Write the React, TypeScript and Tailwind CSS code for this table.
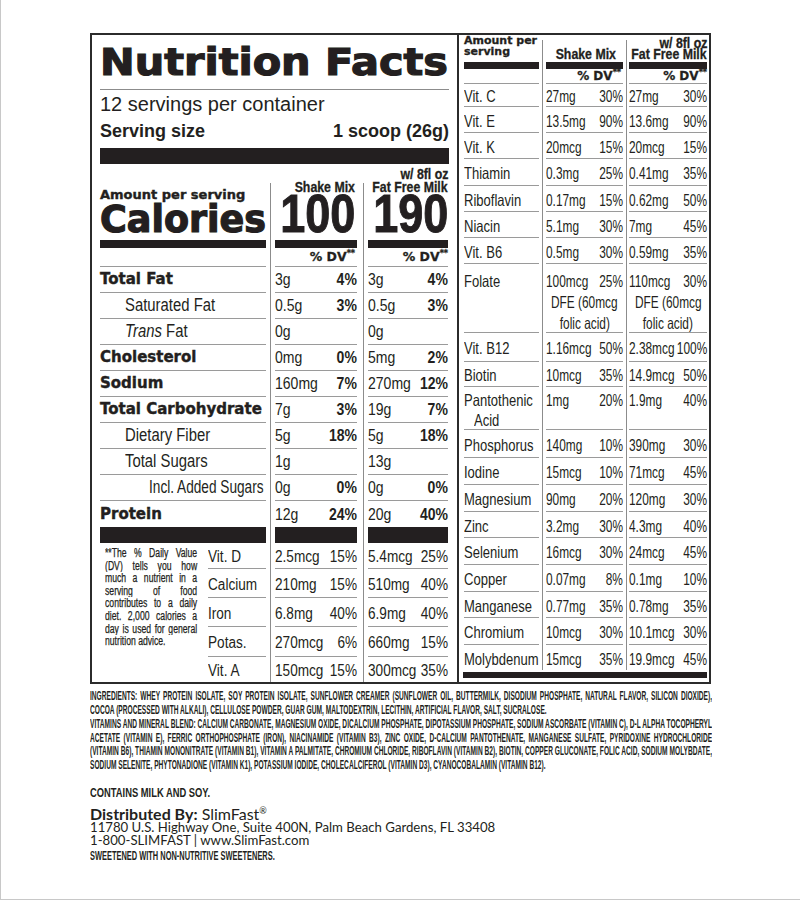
import React from "react";

const HEAVY = "font-['DejaVu_Sans',sans-serif] font-bold";
const ARIAL = "font-['Liberation_Sans',Arial,sans-serif]";
const LINE = "border-b border-[#9a9a9a]";

// Liberation Sans squeezed horizontally stands in for Helvetica Condensed
function Cn({ children, sx, o = "origin-left", cls = "" }: { children: React.ReactNode; sx: string; o?: string; cls?: string }) {
  return <span className={`inline-block whitespace-nowrap ${o} ${sx} ${cls}`}>{children}</span>;
}

function Cell({ v, p, bold, cls, sx }: { v: string; p?: string; bold?: boolean; cls: string; sx: string }) {
  return (
    <div className={`shrink-0 flex items-center ${ARIAL} ${cls}`}>
      <div className="flex-1 min-w-0">
        <Cn sx={sx}>{v}</Cn>
      </div>
      {p && (
        <div className="w-0 flex justify-end">
          <Cn sx={sx} o="origin-right" cls={bold ? "font-bold" : ""}>
            {p}
          </Cn>
        </div>
      )}
    </div>
  );
}

type Macro = { label: React.ReactNode; heavy?: boolean; pad?: string; sx?: string; a: string; ap?: string; b: string; bp?: string };

const macros: Macro[] = [
  { label: "Total Fat", heavy: true, a: "3g", ap: "4%", b: "3g", bp: "4%" },
  { label: "Saturated Fat", pad: "pl-[25px]", a: "0.5g", ap: "3%", b: "0.5g", bp: "3%" },
  { label: <><i>Trans</i> Fat</>, pad: "pl-[25px]", a: "0g", b: "0g" },
  { label: "Cholesterol", heavy: true, a: "0mg", ap: "0%", b: "5mg", bp: "2%" },
  { label: "Sodium", heavy: true, a: "160mg", ap: "7%", b: "270mg", bp: "12%" },
  { label: "Total Carbohydrate", heavy: true, a: "7g", ap: "3%", b: "19g", bp: "7%" },
  { label: "Dietary Fiber", pad: "pl-[25px]", a: "5g", ap: "18%", b: "5g", bp: "18%" },
  { label: "Total Sugars", pad: "pl-[25px]", a: "1g", b: "13g" },
  { label: "Incl. Added Sugars", pad: "pl-[49px]", sx: "scale-x-[0.78]", a: "0g", ap: "0%", b: "0g", bp: "0%" },
  { label: "Protein", heavy: true, a: "12g", ap: "24%", b: "20g", bp: "40%" },
];

const minerals = [
  { label: "Vit. D", a: "2.5mcg", ap: "15%", b: "5.4mcg", bp: "25%", h: "h-[26px]" },
  { label: "Calcium", a: "210mg", ap: "15%", b: "510mg", bp: "40%", h: "h-[29px]" },
  { label: "Iron", a: "6.8mg", ap: "40%", b: "6.9mg", bp: "40%", h: "h-[29px]" },
  { label: "Potas.", a: "270mcg", ap: "6%", b: "660mg", bp: "15%", h: "h-[30px]" },
  { label: "Vit. A", a: "150mcg", ap: "15%", b: "300mcg", bp: "35%", h: "h-[25px]" },
];

const footnote = [
  "**The % Daily Value",
  "(DV) tells you how",
  "much a nutrient in a",
  "serving of food",
  "contributes to a daily",
  "diet. 2,000 calories a",
  "day is used for general",
  "nutrition advice.",
];

type Vit = { label: string; label2?: string; a: string; ap: string; b: string; bp: string; h: string; extra?: string[] };

const vitamins: Vit[] = [
  { label: "Vit. C", a: "27mg", ap: "30%", b: "27mg", bp: "30%", h: "h-[23px]" },
  { label: "Vit. E", a: "13.5mg", ap: "90%", b: "13.6mg", bp: "90%", h: "h-[26px]" },
  { label: "Vit. K", a: "20mcg", ap: "15%", b: "20mcg", bp: "15%", h: "h-[26px]" },
  { label: "Thiamin", a: "0.3mg", ap: "25%", b: "0.41mg", bp: "35%", h: "h-[27px]" },
  { label: "Riboflavin", a: "0.17mg", ap: "15%", b: "0.62mg", bp: "50%", h: "h-[26px]" },
  { label: "Niacin", a: "5.1mg", ap: "30%", b: "7mg", bp: "45%", h: "h-[26px]" },
  { label: "Vit. B6", a: "0.5mg", ap: "30%", b: "0.59mg", bp: "35%", h: "h-[26px]" },
  { label: "Folate", a: "100mcg", ap: "25%", b: "110mcg", bp: "30%", h: "h-[69px]", extra: ["DFE (60mcg", "folic acid)"] },
  { label: "Vit. B12", a: "1.16mcg", ap: "50%", b: "2.38mcg", bp: "100%", h: "h-[29px]" },
  { label: "Biotin", a: "10mcg", ap: "35%", b: "14.9mcg", bp: "50%", h: "h-[25px]" },
  { label: "Pantothenic", label2: "Acid", a: "1mg", ap: "20%", b: "1.9mg", bp: "40%", h: "h-[43px]" },
  { label: "Phosphorus", a: "140mg", ap: "10%", b: "390mg", bp: "30%", h: "h-[28px]" },
  { label: "Iodine", a: "15mcg", ap: "10%", b: "71mcg", bp: "45%", h: "h-[27px]" },
  { label: "Magnesium", a: "90mg", ap: "20%", b: "120mg", bp: "30%", h: "h-[27px]" },
  { label: "Zinc", a: "3.2mg", ap: "30%", b: "4.3mg", bp: "40%", h: "h-[26px]" },
  { label: "Selenium", a: "16mcg", ap: "30%", b: "24mcg", bp: "45%", h: "h-[27px]" },
  { label: "Copper", a: "0.07mg", ap: "8%", b: "0.1mg", bp: "10%", h: "h-[27px]" },
  { label: "Manganese", a: "0.77mg", ap: "35%", b: "0.78mg", bp: "35%", h: "h-[26px]" },
  { label: "Chromium", a: "10mcg", ap: "30%", b: "10.1mcg", bp: "30%", h: "h-[27px]" },
  { label: "Molybdenum", a: "15mcg", ap: "35%", b: "19.9mcg", bp: "45%", h: "h-[25px]" },
];

const ingredients = [
  "INGREDIENTS: WHEY PROTEIN ISOLATE, SOY PROTEIN ISOLATE, SUNFLOWER CREAMER (SUNFLOWER OIL, BUTTERMILK, DISODIUM PHOSPHATE, NATURAL FLAVOR, SILICON DIOXIDE),",
  "COCOA (PROCESSED WITH ALKALI), CELLULOSE POWDER, GUAR GUM, MALTODEXTRIN, LECITHIN, ARTIFICIAL FLAVOR, SALT, SUCRALOSE.",
];

const blend = [
  "VITAMINS AND MINERAL BLEND: CALCIUM CARBONATE, MAGNESIUM OXIDE, DICALCIUM PHOSPHATE, DIPOTASSIUM PHOSPHATE, SODIUM ASCORBATE (VITAMIN C), D-L ALPHA TOCOPHERYL",
  "ACETATE (VITAMIN E), FERRIC ORTHOPHOSPHATE (IRON), NIACINAMIDE (VITAMIN B3), ZINC OXIDE, D-CALCIUM PANTOTHENATE, MANGANESE SULFATE, PYRIDOXINE HYDROCHLORIDE",
  "(VITAMIN B6), THIAMIN MONONITRATE (VITAMIN B1), VITAMIN A PALMITATE, CHROMIUM CHLORIDE, RIBOFLAVIN (VITAMIN B2), BIOTIN, COPPER GLUCONATE, FOLIC ACID, SODIUM MOLYBDATE,",
  "SODIUM SELENITE, PHYTONADIONE (VITAMIN K1), POTASSIUM IODIDE, CHOLECALCIFEROL (VITAMIN D3), CYANOCOBALAMIN (VITAMIN B12).",
];

const Divider1 = ({ top = "" }: { top?: string }) => <div className={`ml-[4px] mr-[4px] w-px shrink-0 bg-[#8c8c8c] ${top}`} />;
const Divider2 = ({ top = "" }: { top?: string }) => <div className={`ml-[6px] mr-[4px] w-px shrink-0 bg-[#8c8c8c] ${top}`} />;
const RDivider1 = ({ top = "" }: { top?: string }) => <div className={`ml-[3px] mr-[3px] w-px shrink-0 bg-[#8c8c8c] ${top}`} />;
const RDivider2 = ({ top = "" }: { top?: string }) => <div className={`ml-[3px] mr-[2px] w-px shrink-0 bg-[#8c8c8c] ${top}`} />;

const DV = ({ size }: { size: string }) => (
  <span className={`${HEAVY} ${size} [-webkit-text-stroke:0.3px_#231f20]`}>
    % DV<span className="text-[8px] align-[5px]">**</span>
  </span>
);

// squeezed, justified line for the tiny condensed print
function Squeeze({ text, full, wide, scale, lead }: { text: string; full?: boolean; wide: string; scale: string; lead: string }) {
  return (
    <div className={`overflow-hidden ${lead}`}>
      <div className={`origin-top-left ${wide} ${scale} ${full ? "text-justify [text-align-last:justify]" : "text-left"}`}>{text}</div>
    </div>
  );
}

function LeftPanel() {
  return (
    <div className="w-[367px] shrink-0 border-r-2 border-[#2b2b2b] px-[8px] flex flex-col">
      <div className="mt-[8px] h-[40px]">
        <div className={`origin-left scale-x-[1.12] leading-[40px] text-[37px] whitespace-nowrap ${HEAVY} [-webkit-text-stroke:1.2px_#231f20]`}>
          Nutrition Facts
        </div>
      </div>
      <div className="mt-[6px] h-px bg-[#8c8c8c]" />
      <div className={`mt-[3px] h-[22px] leading-[22px] text-[20px] ${ARIAL}`}>12 servings per container</div>
      <div className={`mt-[5px] h-[22px] leading-[22px] text-[18px] font-bold flex justify-between ${ARIAL}`}>
        <span>Serving size</span>
        <span>1 scoop (26g)</span>
      </div>
      <div className="mt-[6px] h-[16px] bg-[#231f20]" />

      {/* calories header */}
      <div className="flex h-[76px]">
        <div className="w-[166px] shrink-0 flex flex-col justify-end pb-[2px]">
          <div className={`text-[13px] leading-[15px] whitespace-nowrap ${HEAVY} [-webkit-text-stroke:0.4px_#231f20]`}>Amount per serving</div>
          <div className={`text-[36.5px] leading-[36px] ${HEAVY} [-webkit-text-stroke:1.2px_#231f20]`}>Calories</div>
        </div>
        <Divider1 top="mt-[19px]" />
        <div className={`w-[82px] shrink-0 flex flex-col justify-end items-end pb-[6px] pr-[2px] ${ARIAL} font-bold`}>
          <Cn sx="scale-x-[0.85]" o="origin-right" cls="text-[14.5px] leading-[13px] [-webkit-text-stroke:0.3px_#231f20]">Shake Mix</Cn>
          <Cn sx="scale-x-[0.85]" o="origin-right" cls="text-[53px] leading-[40px] [-webkit-text-stroke:1px_#231f20]">100</Cn>
        </div>
        <Divider2 top="mt-[19px]" />
        <div className={`w-[80px] shrink-0 flex flex-col justify-end items-end pb-[6px] ${ARIAL} font-bold`}>
          <Cn sx="scale-x-[0.85]" o="origin-right" cls="text-[14.5px] leading-[13px] [-webkit-text-stroke:0.3px_#231f20]">w/ 8fl oz</Cn>
          <Cn sx="scale-x-[0.85]" o="origin-right" cls="text-[14.5px] leading-[13px] [-webkit-text-stroke:0.3px_#231f20]">Fat Free Milk</Cn>
          <Cn sx="scale-x-[0.85]" o="origin-right" cls="text-[53px] leading-[40px] [-webkit-text-stroke:1px_#231f20]">190</Cn>
        </div>
      </div>

      <div className="flex h-[8px]">
        <div className="w-[166px] shrink-0 bg-[#231f20]" />
        <Divider1 />
        <div className="w-[82px] shrink-0 bg-[#231f20]" />
        <Divider2 />
        <div className="w-[80px] shrink-0 bg-[#231f20]" />
      </div>

      <div className="flex h-[19px]">
        <div className={`w-[166px] shrink-0 ${LINE}`} />
        <Divider1 />
        <div className={`w-[82px] shrink-0 flex items-center justify-end pr-[2px] pt-[1px] ${LINE}`}>
          <DV size="text-[12.5px]" />
        </div>
        <Divider2 />
        <div className={`w-[80px] shrink-0 flex items-center justify-end pt-[1px] ${LINE}`}>
          <DV size="text-[12.5px]" />
        </div>
      </div>

      {macros.map((m, i) => {
        const line = i < macros.length - 1 ? LINE : "";
        return (
          <div key={i} className="flex h-[26px]">
            {m.heavy ? (
              <div className={`w-[166px] shrink-0 flex items-center whitespace-nowrap text-[15px] ${HEAVY} [-webkit-text-stroke:0.4px_#231f20] ${line}`}>
                {m.label}
              </div>
            ) : (
              <div className={`w-[166px] shrink-0 flex items-center text-[17.5px] ${ARIAL} ${m.pad} ${line}`}>
                <Cn sx={m.sx ?? "scale-x-[0.85]"}>{m.label}</Cn>
              </div>
            )}
            <Divider1 />
            <Cell v={m.a} p={m.ap} bold sx="scale-x-[0.85]" cls={`w-[82px] text-[16.5px] ${line}`} />
            <Divider2 />
            <Cell v={m.b} p={m.bp} bold sx="scale-x-[0.85]" cls={`w-[80px] text-[16.5px] ${line}`} />
          </div>
        );
      })}

      <div className="flex h-[16px]">
        <div className="w-[166px] shrink-0 bg-[#231f20]" />
        <Divider1 />
        <div className="w-[82px] shrink-0 bg-[#231f20]" />
        <Divider2 />
        <div className="w-[80px] shrink-0 bg-[#231f20]" />
      </div>

      {/* lower vitamins + footnote */}
      <div className="flex flex-1">
        <div className={`w-[108px] shrink-0 pt-[4px] pl-[5px] ${ARIAL} text-[12px] [-webkit-text-stroke:0.25px_#231f20]`}>
          {footnote.map((t, i) => (
            <Squeeze key={i} text={t} full={i < footnote.length - 1} wide="w-[128px]" scale="scale-x-[0.72]" lead="h-[12.6px] leading-[12.6px]" />
          ))}
        </div>
        <div className="flex flex-col">
          {minerals.map((m, i) => {
            const line = i < minerals.length - 1 ? LINE : "";
            return (
              <div key={i} className={`flex ${m.h}`}>
                <div className={`w-[58px] shrink-0 flex items-center pt-[3px] ${ARIAL} text-[16px] ${line}`}>
                  <Cn sx="scale-x-[0.85]">{m.label}</Cn>
                </div>
                <Divider1 />
                <Cell v={m.a} p={m.ap} sx="scale-x-[0.85]" cls={`w-[82px] text-[16px] pt-[3px] ${line}`} />
                <Divider2 />
                <Cell v={m.b} p={m.bp} sx="scale-x-[0.85]" cls={`w-[80px] text-[16px] pt-[3px] ${line}`} />
              </div>
            );
          })}
        </div>
      </div>
    </div>
  );
}

const RL = "scale-x-[0.79]";
const RV = "scale-x-[0.72]";

function RightPanel() {
  return (
    <div className="w-[250px] shrink-0 pl-[5px] pr-[2px] flex flex-col">
      <div className="flex h-[27px]">
        <div className={`w-[75px] shrink-0 text-[11px] leading-[11px] ${HEAVY} [-webkit-text-stroke:0.3px_#231f20]`}>
          Amount per
          <br />
          serving
        </div>
        <RDivider1 top="mt-[5px]" />
        <div className={`w-[77px] shrink-0 flex items-end justify-end pr-[7px] pb-[2px] ${ARIAL} font-bold`}>
          <Cn sx="scale-x-[0.85]" o="origin-right" cls="text-[14.5px] leading-[12px] [-webkit-text-stroke:0.3px_#231f20]">Shake Mix</Cn>
        </div>
        <RDivider2 top="mt-[5px]" />
        <div className={`w-[78px] shrink-0 flex flex-col items-end justify-end pb-[2px] ${ARIAL} font-bold`}>
          <Cn sx="scale-x-[0.85]" o="origin-right" cls="text-[14.5px] leading-[11px] [-webkit-text-stroke:0.3px_#231f20]">w/ 8fl oz</Cn>
          <Cn sx="scale-x-[0.85]" o="origin-right" cls="text-[14.5px] leading-[11px] [-webkit-text-stroke:0.3px_#231f20]">Fat Free Milk</Cn>
        </div>
      </div>

      <div className="flex h-[7px]">
        <div className="w-[75px] shrink-0 bg-[#231f20]" />
        <RDivider1 />
        <div className="w-[77px] shrink-0 bg-[#231f20]" />
        <RDivider2 />
        <div className="w-[78px] shrink-0 bg-[#231f20]" />
      </div>

      <div className="flex h-[15px]">
        <div className={`w-[75px] shrink-0 ${LINE}`} />
        <RDivider1 />
        <div className={`w-[77px] shrink-0 flex items-end justify-end pr-[2px] ${LINE}`}>
          <DV size="text-[12px] leading-[13px]" />
        </div>
        <RDivider2 />
        <div className={`w-[78px] shrink-0 flex items-end justify-end ${LINE}`}>
          <DV size="text-[12px] leading-[13px]" />
        </div>
      </div>

      {vitamins.map((v, i) => {
        const line = i < vitamins.length - 1 ? LINE : "";
        if (v.extra) {
          const col = (a: string, p: string, w: string) => (
            <div className={`${w} shrink-0 pt-[7px] leading-[21px] ${ARIAL} text-[16.5px] ${line}`}>
              <div className="flex">
                <div className="flex-1 min-w-0">
                  <Cn sx={RV}>{a}</Cn>
                </div>
                <div className="w-0 flex justify-end">
                  <Cn sx={RV} o="origin-right">{p}</Cn>
                </div>
              </div>
              {v.extra!.map((t) => (
                <div key={t} className="flex justify-center">
                  <Cn sx={RV} o="origin-center">{t}</Cn>
                </div>
              ))}
            </div>
          );
          return (
            <div key={i} className={`flex ${v.h}`}>
              <div className={`w-[75px] shrink-0 pt-[7px] leading-[21px] ${ARIAL} text-[16.5px] ${line}`}>
                <Cn sx={RL}>{v.label}</Cn>
              </div>
              <RDivider1 />
              {col(v.a, v.ap, "w-[77px]")}
              <RDivider2 />
              {col(v.b, v.bp, "w-[78px]")}
            </div>
          );
        }
        if (v.label2) {
          return (
            <div key={i} className={`flex ${v.h}`}>
              <div className={`w-[75px] shrink-0 pt-[3px] leading-[20px] ${ARIAL} text-[16.5px] ${line}`}>
                <div>
                  <Cn sx={RL}>{v.label}</Cn>
                </div>
                <div className="pl-[10px]">
                  <Cn sx={RL}>{v.label2}</Cn>
                </div>
              </div>
              <RDivider1 />
              <Cell v={v.a} p={v.ap} sx={RV} cls={`w-[77px] self-stretch items-start pt-[3px] leading-[20px] text-[16.5px] ${line}`} />
              <RDivider2 />
              <Cell v={v.b} p={v.bp} sx={RV} cls={`w-[78px] self-stretch items-start pt-[3px] leading-[20px] text-[16.5px] ${line}`} />
            </div>
          );
        }
        return (
          <div key={i} className={`flex ${v.h}`}>
            <div className={`w-[75px] shrink-0 flex items-center pt-[3px] ${ARIAL} text-[16.5px] ${line}`}>
              <Cn sx={RL}>{v.label}</Cn>
            </div>
            <RDivider1 />
            <Cell v={v.a} p={v.ap} sx={RV} cls={`w-[77px] pt-[3px] text-[16.5px] ${line}`} />
            <RDivider2 />
            <Cell v={v.b} p={v.bp} sx={RV} cls={`w-[78px] pt-[3px] text-[16.5px] ${line}`} />
          </div>
        );
      })}

      <div className="mt-[2px] ml-[-1px] h-[6px] bg-[#231f20]" />
    </div>
  );
}

function Footer() {
  const print = `${ARIAL} font-bold text-[12px]`;
  return (
    <div className="w-[622px]">
      <div className={`mt-[6px] ${print}`}>
        {ingredients.map((t, i) => (
          <Squeeze key={i} text={t} full={i === 0} wide="w-[1131px]" scale="scale-x-[0.55]" lead="h-[13.5px] leading-[13.5px]" />
        ))}
      </div>
      <div className={`mt-[1px] ${print}`}>
        {blend.map((t, i) => (
          <Squeeze key={i} text={t} full={i < blend.length - 1} wide="w-[1131px]" scale="scale-x-[0.55]" lead="h-[13.5px] leading-[13.5px]" />
        ))}
      </div>
      <div className={`mt-[14px] ${ARIAL} font-bold text-[12px]`}>
        <Squeeze text="CONTAINS MILK AND SOY." wide="w-[800px]" scale="scale-x-[0.78]" lead="h-[14px] leading-[14px]" />
      </div>
      <div className="mt-[4px] font-['Lato',sans-serif] text-[#231f20]">
        <div className="text-[16px] leading-[14px]">
          <span className="font-bold">Distributed By:</span> SlimFast
          <span className="text-[9px] align-[6px]">®</span>
        </div>
        <div className="text-[13.2px] leading-[13px]">11780 U.S. Highway One, Suite 400N, Palm Beach Gardens, FL 33408</div>
        <div className="text-[13.2px] leading-[13px]">1-800-SLIMFAST | www.SlimFast.com</div>
      </div>
      <div className={`mt-[2px] ${ARIAL} font-bold text-[12px]`}>
        <Squeeze text="SWEETENED WITH NON-NUTRITIVE SWEETENERS." wide="w-[800px]" scale="scale-x-[0.62]" lead="h-[14px] leading-[14px]" />
      </div>
    </div>
  );
}

export default function App() {
  return (
    <div className="w-[800px] h-[900px] overflow-hidden bg-white border-l border-b border-[#c8c8c8] pl-[89px] pt-[33px] text-[#231f20]">
      <div className="flex w-[621px] h-[651px] border-2 border-[#2b2b2b]">
        <LeftPanel />
        <RightPanel />
      </div>
      <Footer />
    </div>
  );
}
